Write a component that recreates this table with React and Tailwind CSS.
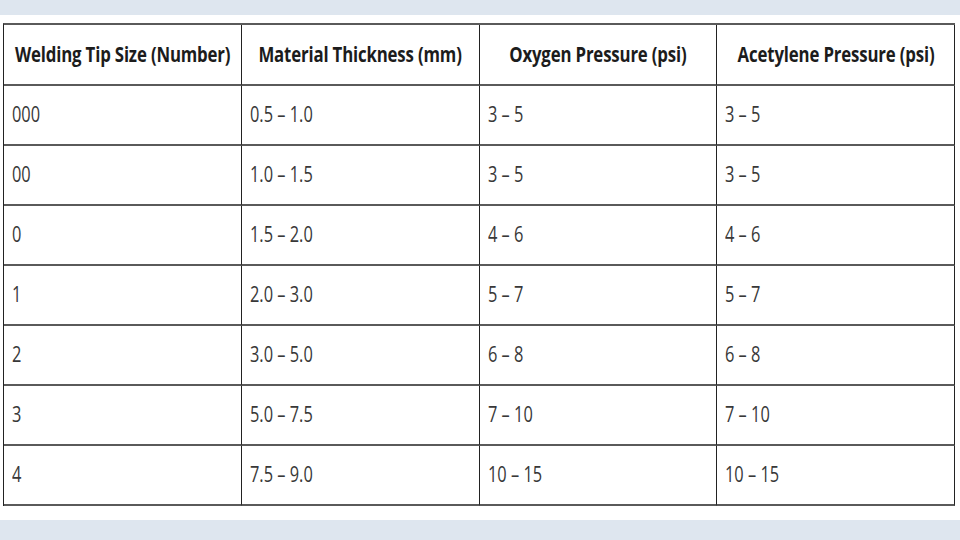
import React from 'react'

const headers = [
    "Welding Tip Size (Number)",
    "Material Thickness (mm)",
    "Oxygen Pressure (psi)",
    "Acetylene Pressure (psi)"
]

const rows = [
    ["000", "0.5 – 1.0", "3 – 5", "3 – 5"],
    ["00", "1.0 – 1.5", "3 – 5", "3 – 5"],
    ["0", "1.5 – 2.0", "4 – 6", "4 – 6"],
    ["1", "2.0 – 3.0", "5 – 7", "5 – 7"],
    ["2", "3.0 – 5.0", "6 – 8", "6 – 8"],
    ["3", "5.0 – 7.5", "7 – 10", "7 – 10"],
    ["4", "7.5 – 9.0", "10 – 15", "10 – 15"]
]

const App = () => {
    return (
        <div className="w-[960px] h-[540px] bg-[#dee6ef] pt-[15px] overflow-hidden" style={{ fontFamily: '"Open Sans", "Noto Sans", sans-serif' }}>
            <div className="h-[505px] bg-white pt-[8px] pl-[3px]">
                <div className="w-[952px] border-t-[2px] border-l-[1.5px] border-t-[#5a5a5a] border-l-[#222]">
                    <div className="grid grid-cols-4 h-[61px]">
                        {headers.map((h, i) => (
                            <div key={i} className="flex items-center justify-center border-b-[2px] border-b-[#5a5a5a] border-r-[1.5px] border-r-[#222] whitespace-nowrap">
                                <span className="inline-block scale-x-[0.8] origin-center text-[21px] font-bold text-[#1c1c1c] tracking-[-0.2px]">{h}</span>
                            </div>
                        ))}
                    </div>
                    {rows.map((r, ri) => (
                        <div key={ri} className="grid grid-cols-4 h-[60px]">
                            {r.map((c, ci) => (
                                <div key={ci} className="flex items-center pl-[8px] border-b-[2px] border-b-[#5a5a5a] border-r-[1.5px] border-r-[#222] whitespace-nowrap">
                                    <span className="inline-block scale-x-[0.78] origin-left text-[21px] text-[#383838]">{c}</span>
                                </div>
                            ))}
                        </div>
                    ))}
                </div>
            </div>
        </div>
    )
}

export default App
